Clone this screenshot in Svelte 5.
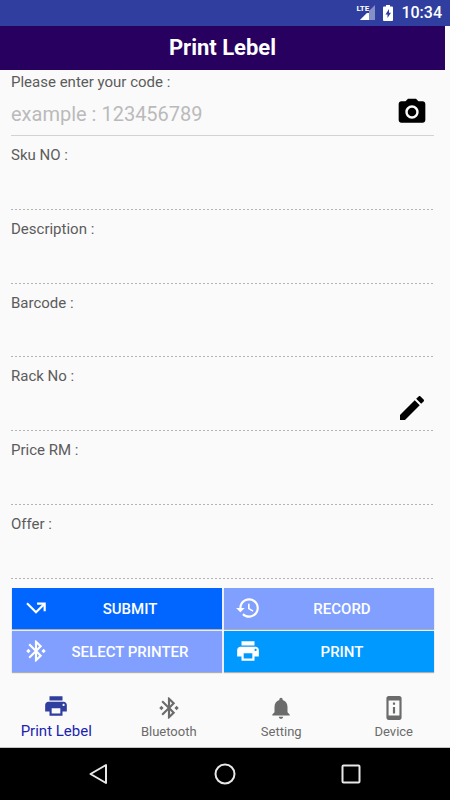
<script lang="ts">
  interface Field {
    id: string;
    label: string;
    editable?: boolean;
  }

  const icons = {
    camera:
      'M9 2 7.17 4H4c-1.1 0-2 .9-2 2v12c0 1.1.9 2 2 2h16c1.1 0 2-.9 2-2V6c0-1.1-.9-2-2-2h-3.17L15 2H9zm3 15c-2.76 0-5-2.24-5-5s2.24-5 5-5 5 2.24 5 5-2.24 5-5 5zM12 8.8a3.2 3.2 0 1 0 0 6.4 3.2 3.2 0 0 0 0-6.4z',
    edit: 'M3 17.25V21h3.75L17.81 9.94l-3.75-3.75L3 17.25zM20.71 7.04c.39-.39.39-1.02 0-1.41l-2.34-2.34c-.39-.39-1.02-.39-1.41 0l-1.83 1.83 3.75 3.75 1.83-1.83z',
    submit: 'M3 8.41l9 9 7-7V15h2V7h-8v2h4.59L12 14.59 4.41 7 3 8.41z',
    history:
      'M13 3c-4.97 0-9 4.03-9 9H1l3.89 3.89.07.14L9 12H6c0-3.87 3.13-7 7-7s7 3.13 7 7-3.13 7-7 7c-1.93 0-3.68-.79-4.94-2.06l-1.42 1.42C8.27 19.99 10.51 21 13 21c4.97 0 9-4.03 9-9s-4.03-9-9-9zm-1 5v5l4.28 2.54.72-1.21-3.5-2.08V8H12z',
    bluetooth:
      'M7 12l-2-2-2 2 2 2 2-2zm10.71-4.29L12 2h-1v7.59L6.41 5 5 6.41 10.59 12 5 17.59 6.41 19 11 14.41V22h1l5.71-5.71-4.3-4.29 4.3-4.29zM13 5.83l1.88 1.88L13 9.59V5.83zm1.88 10.46L13 18.17v-3.76l1.88 1.88zM19 10l-2 2 2 2 2-2-2-2z',
    print:
      'M19 8H5c-1.66 0-3 1.34-3 3v6h4v4h12v-4h4v-6c0-1.66-1.34-3-3-3zm-3 11H8v-5h8v5zm3-7c-.55 0-1-.45-1-1s.45-1 1-1 1 .45 1 1-.45 1-1 1zm-1-9H6v4h12V3z',
    bell: 'M12 22c1.1 0 2-.9 2-2h-4c0 1.1.89 2 2 2zm6-6v-5c0-3.07-1.64-5.64-4.5-6.32V4c0-.83-.67-1.5-1.5-1.5s-1.5.67-1.5 1.5v.68C7.63 5.36 6 7.92 6 11v5l-2 2v1h16v-1l-2-2z',
    device:
      'M13 7h-2v2h2V7zm0 4h-2v6h2v-6zm4-9.99L7 1c-1.1 0-2 .9-2 2v18c0 1.1.9 2 2 2h10c1.1 0 2-.9 2-2V3c0-1.1-.9-1.99-2-1.99zM17 19H7V5h10v14z'
  };

  const fields: Field[] = [
    { id: 'sku', label: 'Sku NO :' },
    { id: 'description', label: 'Description :' },
    { id: 'barcode', label: 'Barcode :' },
    { id: 'rack', label: 'Rack No :', editable: true },
    { id: 'price', label: 'Price RM :' },
    { id: 'offer', label: 'Offer :' }
  ];

  const actions = [
    { label: 'SUBMIT', icon: icons.submit, tone: 'strong' },
    { label: 'RECORD', icon: icons.history, tone: 'soft' },
    { label: 'SELECT PRINTER', icon: icons.bluetooth, tone: 'soft' },
    { label: 'PRINT', icon: icons.print, tone: 'bright' }
  ];

  const tabs = [
    { id: 'print', label: 'Print Lebel', icon: icons.print },
    { id: 'bluetooth', label: 'Bluetooth', icon: icons.bluetooth },
    { id: 'setting', label: 'Setting', icon: icons.bell },
    { id: 'device', label: 'Device', icon: icons.device }
  ];

  let code = $state('');
  let activeTab = $state('print');
  let rackLocked = $state(true);
</script>

{#snippet icon(path: string)}
  <svg class="icon" viewBox="0 0 24 24" aria-hidden="true"><path d={path} /></svg>
{/snippet}

<div class="screen">
  <div class="status-bar">
    <div class="signal">
      <svg viewBox="0 0 15 15" aria-hidden="true">
        <path d="M15 0v15H0z" fill="#8590c6" />
        <path d="M9 6v9H0z" fill="#fff" />
      </svg>
      <span class="lte">LTE</span>
    </div>
    <svg class="battery" viewBox="0 0 10 16" aria-hidden="true">
      <path d="M3 0h4v1.500h2a1 1 0 0 1 1 1V15a1 1 0 0 1-1 1H1a1 1 0 0 1-1-1V2.500a1 1 0 0 1 1-1h2z" fill="#fff" />
      <path d="M6 4 2.500 9.500h2V13L8 7.800H6z" fill="#303f9f" />
    </svg>
    <time>10:34</time>
  </div>

  <header>
    <h1>Print Lebel</h1>
  </header>

  <form onsubmit={(e) => e.preventDefault()}>
    <div class="code-field">
      <label for="code">Please enter your code :</label>
      <div class="row">
        <input id="code" type="text" placeholder="example : 123456789" bind:value={code} />
        <button type="button" class="icon-button" aria-label="Scan code">{@render icon(icons.camera)}</button>
      </div>
    </div>

    {#each fields as field (field.id)}
      <div class="field">
        <label for={field.id}>{field.label}</label>
        <div class="row">
          <input id={field.id} type="text" readonly={!field.editable || rackLocked} />
          {#if field.editable}
            <button type="button" class="icon-button" aria-label="Edit rack" onclick={() => (rackLocked = !rackLocked)}>
              {@render icon(icons.edit)}
            </button>
          {/if}
        </div>
      </div>
    {/each}

    <div class="actions">
      {#each actions as action (action.label)}
        <button type="button" class="action {action.tone}">
          {@render icon(action.icon)}
          <span>{action.label}</span>
        </button>
      {/each}
    </div>
  </form>

  <nav class="tabs">
    {#each tabs as tab (tab.id)}
      <button type="button" class="tab" class:active={activeTab === tab.id} onclick={() => (activeTab = tab.id)}>
        {@render icon(tab.icon)}
        <span>{tab.label}</span>
      </button>
    {/each}
  </nav>

  <div class="system-nav">
    <button type="button" aria-label="Back">
      <svg viewBox="0 0 24 24"><path d="M19 3v18L3.500 12z" /></svg>
    </button>
    <button type="button" aria-label="Home">
      <svg viewBox="0 0 24 24"><circle cx="12" cy="12" r="9.500" /></svg>
    </button>
    <button type="button" aria-label="Recent apps">
      <svg viewBox="0 0 24 24"><rect x="3.500" y="3.500" width="17" height="17" rx="1" /></svg>
    </button>
  </div>
</div>

<style>
  :global(body) {
    margin: 0;
    background: #fafafa;
  }

  .screen {
    display: flex;
    flex-direction: column;
    min-height: 100vh;
    font-family: Roboto, 'Liberation Sans', sans-serif;
    color: #5c5c5c;
  }

  button {
    margin: 0;
    padding: 0;
    border: 0;
    background: none;
    color: inherit;
    font: inherit;
    cursor: pointer;
  }

  .icon {
    display: block;
    width: 26px;
    height: 26px;
    flex: none;
    fill: currentColor;
  }

  .status-bar {
    display: flex;
    align-items: center;
    justify-content: flex-end;
    gap: 8px;
    height: 26px;
    padding-right: 8px;
    background: #303f9f;
    color: #fff;
    font-size: 16px;
    font-weight: 500;
  }

  .status-bar time {
    line-height: 28px;
  }

  .signal {
    position: relative;
    width: 19px;
    height: 16px;
  }

  .signal svg {
    display: block;
    width: 15px;
    height: 15px;
    margin-left: 4px;
  }

  .lte {
    position: absolute;
    top: 0;
    left: 0;
    background: #303f9f;
    font-size: 8px;
    line-height: 8px;
    font-weight: 700;
  }

  .battery {
    width: 10px;
    height: 16px;
  }

  header {
    margin-right: 5px;
    background: #270060;
  }

  h1 {
    margin: 0;
    font-size: 22px;
    line-height: 44px;
    font-weight: 700;
    text-align: center;
    color: #fff;
  }

  form {
    display: flex;
    flex: 1;
    flex-direction: column;
    padding: 0 16px 0 11px;
  }

  label {
    display: block;
    font-size: 15px;
    line-height: 20px;
  }

  .code-field {
    padding: 2px 0 3px;
    border-bottom: 1px solid #d2d2d2;
  }

  .field {
    flex: 1;
    padding-top: 9px;
    background: repeating-linear-gradient(to right, #b4b4b4 0 2px, transparent 2px 4px) bottom / 100% 1px no-repeat;
  }

  .row {
    display: flex;
    align-items: center;
    height: 40px;
    padding-right: 6px;
  }

  .field .row {
    height: 44px;
  }

  input {
    flex: 1;
    min-width: 0;
    padding: 4px 0 0;
    border: 0;
    outline: 0;
    background: none;
    color: #5c5c5c;
    font: inherit;
    font-size: 20px;
    line-height: 24px;
  }

  input::placeholder {
    color: #bababa;
    opacity: 1;
  }

  .icon-button {
    color: #000;
  }

  .icon-button .icon {
    width: 32px;
    height: 32px;
  }

  .actions {
    display: grid;
    grid-template-columns: 1fr 1fr;
    gap: 2px;
    padding: 9px 0 0 1px;
  }

  .action {
    display: flex;
    align-items: center;
    height: 41px;
    padding: 0 11px;
    box-shadow: 0 1px 1px rgba(0, 0, 0, 0.3);
    color: #fff;
    font-size: 15px;
    font-weight: 500;
    line-height: 20px;
  }

  .action span {
    flex: 1;
    padding-top: 2px;
    text-align: center;
  }

  .strong {
    background: #0066ff;
  }

  .soft {
    background: #809fff;
  }

  .bright {
    background: #0099ff;
  }

  .tabs {
    display: grid;
    grid-template-columns: repeat(4, 1fr);
    margin-top: 14px;
    border-bottom: 1px solid #c4c4c4;
  }

  .tab {
    display: flex;
    flex-direction: column;
    align-items: center;
    gap: 1px;
    padding: 9px 0 5px;
    color: #6b6b6b;
    font-size: 13px;
    line-height: 20px;
  }

  .tab.active {
    gap: 2px;
    padding-top: 7px;
    padding-bottom: 6px;
    color: #303f9f;
    font-size: 15px;
  }

  .tab.active span {
    color: #1a24b0;
  }

  .system-nav {
    display: grid;
    grid-template-columns: repeat(3, 126px);
    justify-content: center;
    height: 52px;
    background: #000;
  }

  .system-nav button {
    display: grid;
    place-items: center;
  }

  .system-nav svg {
    width: 24px;
    height: 24px;
    fill: none;
    stroke: #e8e8e8;
    stroke-width: 2;
    stroke-linejoin: round;
  }
</style>
